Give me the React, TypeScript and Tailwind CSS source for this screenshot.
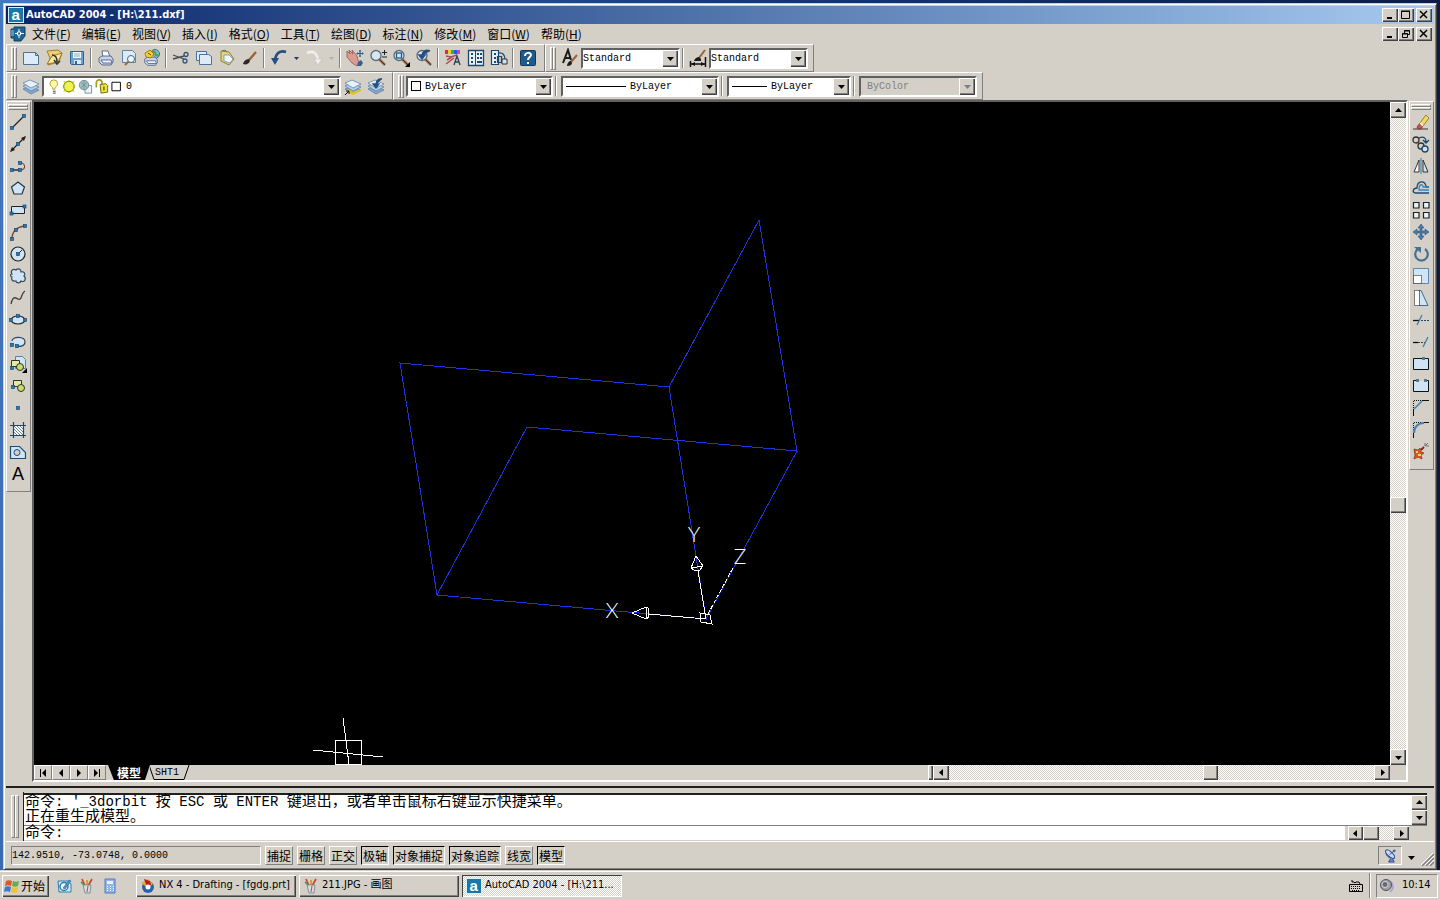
import React from "react";

const raised =
  "bg-[#d4d0c8] shadow-[inset_1px_1px_#ffffff,inset_-1px_-1px_#404040,inset_-2px_-2px_#808080]";
const sunken = "border border-t-[#808080] border-l-[#808080] border-r-white border-b-white";
const dither =
  "bg-[repeating-conic-gradient(#ffffff_0_25%,#d4d0c8_0_50%)] bg-[length:2px_2px]";

const N = "#1c4870";
const F = "#cfe4f4";
const B = "#2a78b0";

function Node({ x, y }: { x: number; y: number }) {
  return <rect x={x - 1.5} y={y - 1.5} width="3" height="3" fill={B} stroke="#164a78" strokeWidth=".7" />;
}

function Layers() {
  return (
    <g stroke="#56799c" strokeWidth=".7">
      <path d="M2 13l7-3 9 4-8 4z" fill="#86a8cc" />
      <path d="M2 10l7-3 9 4-8 4z" fill="#b4cfe8" />
      <path d="M2 7l7-3 9 4-8 4z" fill="#e6f1fb" />
    </g>
  );
}

function Lens({ children }: { children?: React.ReactNode }) {
  return (
    <g>
      <path d="M11 11l6 6" stroke="#a06a40" strokeWidth="2.6" />
      <path d="M11 11l6 6" stroke="#3a3a44" strokeWidth="1" />
      <circle cx="8" cy="7.500" r="5" fill="#d6e6f2" stroke="#5a6a7c" strokeWidth="1.3" />
      {children}
    </g>
  );
}

function Printer() {
  return (
    <g stroke="#4e5f86" strokeWidth=".9">
      <path d="M6 3h6l2 6H7z" fill="#fff" />
      <path d="M3 10l3-2h9l2 3v3l-2 3H6l-3-3z" fill="#c9d3ea" />
      <path d="M5 12h10l1 3H7z" fill="#f4f6fb" />
    </g>
  );
}

const icons: Record<string, React.ReactNode> = {
  new: <path d="M2.500 4.500h12l3 3v9h-15z M14.500 4.500v3h3" fill="#dcebf7" stroke="#4d7296" />,
  open: (
    <g strokeWidth=".9">
      <path d="M3 3l11-1 4 3-3 9-11 3 2-7z" fill="#e8cf78" stroke="#9a7420" />
      <path d="M3 16l5-8 10-3-4 9z" fill="#f7e6a4" stroke="#9a7420" />
      <path d="M8 7c4 0 5 3 5 7M10 12l3 4 3-3" fill="none" stroke="#333" strokeWidth="1.500" />
    </g>
  ),
  save: (
    <g>
      <path d="M3.500 3.500h13v13h-12l-1-1z" fill="#6aa0d4" stroke="#2f608f" />
      <path d="M6 4h8v6H6z" fill="#eef6fc" />
      <path d="M7 6h6M7 8h6" stroke="#7f9cb8" strokeWidth=".8" />
      <path d="M7 12h7v4H7z" fill="#dde8f2" />
      <path d="M8 13h2v3H8z" fill="#2f608f" />
    </g>
  ),
  print: <Printer />,
  preview: (
    <g>
      <path d="M3.500 2.500h10l3 3v9h-13z" fill="#dcebf7" stroke="#6084a6" />
      <circle cx="12" cy="11" r="3.500" fill="#eef6fb" stroke="#46688a" />
      <path d="M9.500 13.500L6 17" stroke="#a06a40" strokeWidth="2" />
    </g>
  ),
  publish: (
    <g>
      <circle cx="13" cy="6" r="4.500" fill="#82bddb" stroke="#346f92" />
      <path d="M10 3l3 1 1 3 3 1" stroke="#5c9c4a" strokeWidth="2" fill="none" />
      <g transform="translate(0 2) scale(.9)"><Printer /></g>
      <path d="M3 5l5-3 4 4-3 4-5-1z" fill="#f3cf2c" stroke="#8f6a10" strokeWidth=".8" />
      <path d="M6 5l3 2" stroke="#6b4b00" />
    </g>
  ),
  cut: (
    <g fill="none" strokeWidth="1.300">
      <path d="M2 7l11 4M2 11l11-3" stroke="#4a4a54" />
      <circle cx="15" cy="6.500" r="2" stroke="#33557d" />
      <circle cx="14" cy="13" r="2" stroke="#33557d" />
    </g>
  ),
  copyclip: (
    <g fill="#dcebf7" stroke="#4d7296">
      <path d="M2.500 3.500h10v9h-10z" />
      <path d="M5.500 6.500h9l3 2v8h-12z" />
    </g>
  ),
  paste: (
    <g>
      <path d="M4 3l8 1 5 7-5 6-8-4z" fill="#dfd67a" stroke="#8c8336" />
      <path d="M7 7h5l4 4-3 4-6-2z" fill="#f2f8fc" stroke="#7591ab" strokeWidth=".8" />
      <path d="M5 3l3-1 2 2" stroke="#6f6f78" fill="none" />
    </g>
  ),
  brush: (
    <g>
      <path d="M9 12l7-8" stroke="#9a6238" strokeWidth="2.400" />
      <path d="M3 16c1-4 4-5 6-5l1 2c-1 3-4 4-7 3z" fill="#2f2a28" />
    </g>
  ),
  undo: (
    <g>
      <path d="M17 4C11 2 7 5 6 12" fill="none" stroke="#244f80" strokeWidth="2.600" />
      <path d="M2 10h8l-4 7z" fill="#244f80" />
    </g>
  ),
  redo: (
    <g>
      <path d="M3 5c6-3 10 0 11 7" fill="none" stroke="#f1efea" strokeWidth="2.600" />
      <path d="M10 11h8l-4 6z" fill="#f1efea" stroke="#bab6ae" strokeWidth=".5" />
    </g>
  ),
  pan: (
    <g>
      <path d="M2 3l3 3-1-4 4 4-1-4 5 6 1 4 3 3-4 3-5-3-5-6z" fill="#d99c92" stroke="#96564e" strokeWidth=".8" />
      <path d="M13 14l3-2 2 3-2 3h-4z" fill="#34608f" />
      <path d="M15 2v7M11.500 5.500h7M14 3h2M14 8h2M12.500 4.500v2M17.500 4.500v2" stroke="#29588a" strokeWidth="1" />
    </g>
  ),
  zoomrt: <Lens><path d="M16.500 2v5M14 4.500h5M14 9h5" stroke="#222" /></Lens>,
  zoomwin: (
    <Lens>
      <rect x="5.500" y="5" width="5" height="5" fill="none" stroke="#1f5a90" strokeWidth="1.300" />
      <path d="M19 14v5h-5z" fill="#000" />
    </Lens>
  ),
  zoomprev: <Lens><path d="M16 3C11 1 8 4 8 8M5 7h6l-3 4z" fill="#244f80" stroke="#244f80" strokeWidth="1.500" /></Lens>,
  props: (
    <g>
      <path d="M2 2h3v4H2z" fill="#e82828" />
      <path d="M5 2h3v4H5z" fill="#e8d028" />
      <path d="M8 2h3v4H8z" fill="#28b848" />
      <path d="M11 2h3v4h-3z" fill="#2858e8" />
      <path d="M14 2h3v4h-3z" fill="#d838c8" />
      <path d="M3 8l5 1 6-2M4 12l5-3M3 16l8-6" stroke="#b04858" strokeWidth="1.500" fill="none" />
      <path d="M11 17l3-9 3 9M12 14h4" stroke="#2a4058" strokeWidth="1.300" fill="none" />
    </g>
  ),
  design: (
    <g>
      <path d="M2.500 2.500h15v15h-15z" fill="#eaf3fa" stroke={N} strokeWidth="1.300" />
      <path d="M9.500 3v14" stroke={N} />
      <path d="M5 5h2v2H5zM5 9h2v2H5zM5 13h2v2H5zM11 5h2v2h-2zM14 5h2v2h-2zM11 9h2v2h-2zM14 9h2v2h-2zM11 13h5v2h-5z" fill={N} />
    </g>
  ),
  palettes: (
    <g>
      <path d="M2.500 2.500h7v14h-7z" fill="#eaf3fa" stroke={N} strokeWidth="1.200" />
      <path d="M5 5h2v2H5zM5 9h2v2H5zM5 13h2v2H5z" fill={N} />
      <path d="M9 5c5-1 7 2 7 7M8.500 8.500h4v6h-4z" fill="none" stroke={N} strokeWidth="1.200" />
      <path d="M13 11h5v5h-5z" fill={F} stroke="#333" />
    </g>
  ),
  help: (
    <g>
      <rect x="2.500" y="2.500" width="15" height="15" rx="1" fill="#1e5a8c" stroke="#12395c" />
      <path d="M7 8c0-4 6-4 6-1 0 2-3 2-3 5" fill="none" stroke="#fff" strokeWidth="2" />
      <path d="M9 14h2v2H9z" fill="#fff" />
    </g>
  ),
  textstyle: (
    <g>
      <path d="M3 15L8 2l3 10M5 10h5" stroke="#1b1b1b" strokeWidth="2" fill="none" />
      <path d="M11 14l6-7" stroke="#9a6238" strokeWidth="2" />
      <path d="M7 18c0-3 2-5 4-5l1 2c0 2-2 3-5 3z" fill="#1b1b1b" />
    </g>
  ),
  dimstyle: (
    <g>
      <path d="M11 10l6-8" stroke="#9a6238" strokeWidth="2" />
      <path d="M6 13c1-3 3-4 5-4l2 2v2z" fill="#1b1b1b" />
      <path d="M2.500 13v6M17.500 9v10M3 16h14" stroke="#111" strokeWidth="1.500" />
      <path d="M3 16l4-2v4zM17 16l-4-2v4z" fill="#111" />
    </g>
  ),
  layers: <Layers />,
  layercur: (
    <g>
      <Layers />
      <path d="M5 13l5 3 8-3v2l-8 4-6-3z" fill="#e2c61c" />
      <path d="M2 19l4-4M3 15h3v3" stroke="#111" fill="none" />
    </g>
  ),
  layerprev: (
    <g>
      <Layers />
      <path d="M16 3c-5-1-6 3-6 6M7 8h6l-3 4z" fill="#244f80" stroke="#244f80" strokeWidth="1.300" />
    </g>
  ),
  line: <g><path d="M4 16L16 4" stroke="#222" strokeWidth="1.200" /><Node x={4} y={16} /><Node x={16} y={4} /></g>,
  xline: (
    <g>
      <path d="M3 17L17 3" stroke="#222" strokeWidth="1.200" />
      <path d="M2 18l2-5 3 3zM18 2l-2 5-3-3z" fill="#222" />
      <Node x={10} y={10} />
    </g>
  ),
  pline: <g><path d="M4 14h8c7 0 5-7 1-7" fill="none" stroke="#7a4038" strokeWidth="1.200" /><path d="M4 14h8" stroke="#222" /><Node x={4} y={14} /><Node x={12} y={14} /><Node x={12} y={7} /></g>,
  polygon: <path d="M10 4l6.500 5-2.500 7H6L3.500 9z" fill={F} stroke="#243444" strokeWidth="1.200" />,
  rect: <g><path d="M3.500 6.500h13v7h-13z" fill={F} stroke="#222" /><Node x={3.5} y={13.5} /><Node x={16.5} y={6.5} /></g>,
  arc: <g><path d="M4 17C4 9 9 5 17 4" fill="none" stroke="#7a4038" strokeWidth="1.300" /><Node x={4} y={17} /><Node x={8} y={8} /><Node x={17} y={4} /></g>,
  circle: <g><circle cx="10" cy="10" r="7" fill={F} stroke="#222" strokeWidth="1.200" /><path d="M10 10l4-4" stroke="#222" /><Node x={10} y={10} /></g>,
  revcloud: <path d="M4 8c-2-3 1-6 4-4 2-2 5-1 5 2 3-1 5 2 3 4 3 3 0 7-3 5-1 3-5 2-5 0-4 1-5-2-4-4-2-1-2-3 0-3z" fill={F} stroke="#3a4a5a" strokeWidth="1.200" />,
  spline: <path d="M3 16c2-9 5-6 7-5 4 2 3-6 7-8" fill="none" stroke="#3c3c44" strokeWidth="1.300" />,
  ellipse: <g><ellipse cx="10" cy="10" rx="7" ry="4" fill={F} stroke="#222" strokeWidth="1.200" /><Node x={3} y={10} /><Node x={17} y={10} /><Node x={10} y={6} /></g>,
  ellarc: <g><path d="M4 9c0-5 13-5 13 1 0 4-5 5-8 4" fill={F} stroke="#35465a" strokeWidth="1.200" /><Node x={4} y={13} /><Node x={9} y={14} /></g>,
  insert: (
    <g strokeWidth="1">
      <path d="M7.500 2.500h7l3 3v9h-10z" fill={F} stroke="#5b7fa2" />
      <path d="M3.500 6.500h8v6h-8z" fill="#e2eca0" stroke="#333" />
      <circle cx="12" cy="13" r="3.500" fill="#c8dc6a" stroke="#333" />
      <Node x={4} y={14} />
      <path d="M19 14v5h-5z" fill="#000" />
    </g>
  ),
  block: (
    <g strokeWidth="1">
      <path d="M5.500 4.500h8v6h-8z" fill="#e2eca0" stroke="#333" />
      <circle cx="13" cy="12" r="3.500" fill="#c8dc6a" stroke="#333" />
      <Node x={5} y={11} />
    </g>
  ),
  point: <Node x={10} y={10} />,
  hatch: (
    <g>
      <path d="M6 6h9v9H6z" fill="#fff" />
      <path d="M6 12l3 3M6 9l6 6M6 6l9 9M9 6l6 6M12 6l3 3" stroke="#35648e" strokeWidth=".8" />
      <path d="M5.500 2v16M15.500 2v16M2 5.500h16M2 15.500h16" stroke={N} strokeWidth="1.200" />
    </g>
  ),
  region: <g><path d="M2.500 4.500h9l6 6v6h-15z" fill={F} stroke="#1f4c74" strokeWidth="1.200" /><circle cx="9" cy="10.500" r="3" fill="#d4d0c8" stroke="#1f4c74" /></g>,
  erase: (
    <g>
      <path d="M2 17h15" stroke="#333" />
      <path d="M9 11l6-8 3 3-6 8z" fill="#f1dc58" stroke="#7e6a20" strokeWidth=".8" />
      <path d="M6 15l3-4 3 3-2 3H7z" fill="#d0524c" stroke="#7e2824" strokeWidth=".8" />
      <path d="M9 11l3 3" stroke="#fff" strokeWidth="1.300" />
    </g>
  ),
  copy: (
    <g fill="#d4d0c8" strokeWidth="1.300">
      <circle cx="5" cy="6" r="3" stroke="#333" />
      <path d="M8 4c5-2 7 0 7 4M12 6l3 3 3-3" fill="none" stroke={N} />
      <circle cx="10" cy="12" r="3" stroke="#333" />
      <circle cx="14" cy="15" r="3" fill={F} stroke={N} />
    </g>
  ),
  mirror: <g><path d="M8 4v12H3z" fill="#fff" stroke="#333" /><path d="M12 4v12h5z" fill={F} stroke="#333" /><path d="M10 2v16" stroke={B} /></g>,
  offset: (
    <g fill="none" strokeWidth="1.300">
      <path d="M18 15H4c-3-1-2-5 2-5 0-8 9-8 9-1h3" stroke={N} />
      <path d="M18 12H8c0-7 4-6 4-3v0h6" stroke="#3e82b8" />
    </g>
  ),
  array: <path d="M2.500 2.500h5.500v5.500H2.500zM12.500 2.500H18v5.500h-5.500zM2.500 12.500h5.500V18H2.500zM12.500 12.500H18V18h-5.500z" fill="#e8f2fa" stroke="#222" strokeWidth="1.200" />,
  move: <path d="M10 2l3 4h-2v3h3V7l4 3-4 3v-2h-3v3h2l-3 4-3-4h2v-3H6v2l-4-3 4-3v2h3V6H7z" fill="#4a7aa6" stroke="#2a557c" strokeWidth=".6" />,
  rotate: <g><path d="M7 5a6.300 6.300 0 1 0 7 0" fill="none" stroke="#48708f" strokeWidth="2.200" /><path d="M3 3h7v6z" fill="#48708f" /></g>,
  scale: <g><path d="M2.500 2.500h15v15h-15z" fill={F} stroke="#5f87ab" /><path d="M2.500 9.500h8v8h-8z" fill="#fff" stroke="#111" strokeDasharray="1 1" /></g>,
  stretch: <g><path d="M8 2.500h2l7 15H8z" fill={F} stroke="#3f6b92" /><path d="M3.500 2.500h5v15h-5z" fill="#fff" stroke="#111" strokeDasharray="1 1" /></g>,
  trim: <g><path d="M2 10.500h6" stroke="#111" strokeWidth="1.300" /><path d="M10 10.500h8" stroke={N} strokeDasharray="2 1" /><path d="M6 15l5-10" stroke="#3e78a8" strokeWidth="1.300" /></g>,
  extend: <g><path d="M2 10.500h5" stroke="#111" strokeWidth="1.300" /><path d="M7 10.500h7" stroke={N} strokeDasharray="2 1" /><path d="M12 15l5-10" stroke="#3e78a8" strokeWidth="1.300" /></g>,
  breakat: <g><path d="M2.500 4.500h15v11h-15z" fill={F} stroke="#111" /><path d="M11 3h3v3h-3z" fill="#58788c" /></g>,
  break: <g><path d="M3 5h14v10H3z" fill={F} /><path d="M5 4.500H2.500v11h15v-11H15" fill="none" stroke="#111" /><path d="M5 3h3v3H5zM13 3h3v3h-3z" fill="#58788c" /></g>,
  chamfer: <g fill="none"><path d="M2.500 10V2.500H10" stroke="#111" strokeDasharray="1 1" /><path d="M2.500 18v-7M11 2.500h7" stroke="#111" /><path d="M3 11l8-8" stroke="#3e82b8" strokeWidth="1.600" /></g>,
  fillet: <g fill="none"><path d="M2.500 10V2.500H10" stroke="#111" strokeDasharray="1 1" /><path d="M2.500 18v-5M13 2.500h5" stroke="#111" /><path d="M3 13c0-6 4-10 10-10" stroke="#3e82b8" strokeWidth="2" /></g>,
  explode: (
    <g>
      <path d="M3 7l4 1 2-2 1 4 3 1-3 2 1 4-4-2-4 2 1-4z" fill="#e0562c" stroke="#7c2c10" strokeWidth=".7" />
      <path d="M5 9h2v2H5zM7 12h3v2H7z" fill="#ffd850" />
      <path d="M10 8l3-3" stroke="#7c2c10" strokeWidth="2" />
      <path d="M14 4l3-3M15 4h3M14 1v3" stroke="#555" strokeWidth=".8" />
    </g>
  ),
};

function Tool({ name, className }: { name: string; className: string }) {
  return (
    <button type="button" aria-label={name} className={`flex shrink-0 items-center justify-center ${className}`}>
      <svg viewBox="0 0 20 20" className="size-5" fill="none">{icons[name]}</svg>
    </button>
  );
}

function Tools({ names }: { names: string[] }) {
  return <>{names.map((n) => <Tool key={n} name={n} className="h-6 w-[23px]" />)}</>;
}

function Sep() {
  return (
    <span className="flex w-[6px] shrink-0 justify-center">
      <span className="h-[20px] w-[2px] border-l border-l-[#808080] border-r border-r-white" />
    </span>
  );
}

function Grip() {
  return (
    <span className="mr-[2px] ml-1 flex h-[23px] shrink-0">
      <span className="w-[3px] border border-t-white border-l-white border-r-[#808080] border-b-[#808080]" />
      <span className="w-[3px] border border-t-white border-l-white border-r-[#808080] border-b-[#808080]" />
    </span>
  );
}

function Bar({ label, children }: { label: string; children: React.ReactNode }) {
  return (
    <div role="toolbar" aria-label={label} className="flex h-full shrink-0 items-center border border-t-white border-l-white border-r-[#808080] border-b-[#808080] pr-[5px]">
      <Grip />
      {children}
    </div>
  );
}

function Tri({ dir, className = "fill-black" }: { dir: "up" | "down" | "left" | "right"; className?: string }) {
  const d = { up: "M1 6h7L4.500 2z", down: "M1 3h7L4.500 7z", left: "M6 1v7L2 4.500z", right: "M3 1v7l4-3.500z" }[dir];
  return <svg viewBox="0 0 9 9" className={`size-[9px] ${className}`}><path d={d} /></svg>;
}

function Combo({ label, value, options, className, disabled, children }: {
  label: string; value: string; options: string[]; className: string; disabled?: boolean; children?: React.ReactNode;
}) {
  return (
    <label className={`flex h-[21px] shrink-0 items-center border-2 border-t-[#606060] border-l-[#606060] border-r-white border-b-white ${disabled ? "bg-[#d4d0c8]" : "bg-white"} ${className}`}>
      {children}
      <select
        aria-label={label}
        defaultValue={value}
        disabled={disabled}
        className={`h-full min-w-0 flex-1 appearance-none bg-transparent font-['Liberation_Mono',monospace] text-[10px] outline-none ${disabled ? "text-[#808080]" : "text-black"}`}
      >
        {options.map((o) => <option key={o}>{o}</option>)}
      </select>
      <span className={`flex h-full w-[16px] shrink-0 items-center justify-center ${raised}`}>
        <Tri dir="down" className={disabled ? "fill-[#808080]" : "fill-black"} />
      </span>
    </label>
  );
}

function Btn({ dir, className }: { dir: "up" | "down" | "left" | "right"; className: string }) {
  return (
    <button type="button" aria-label={`Scroll ${dir}`} className={`flex shrink-0 items-center justify-center ${raised} ${className}`}>
      <Tri dir={dir} />
    </button>
  );
}

function WindowButtons({ restore }: { restore?: boolean }) {
  const cls = `flex h-[14px] w-[16px] items-center justify-center ${raised}`;
  return (
    <div className="ml-auto flex pr-[2px]">
      <button type="button" aria-label="Minimize" className={cls}>
        <svg viewBox="0 0 10 10" className="size-[10px]"><path d="M2 7h5v2H2z" /></svg>
      </button>
      <button type="button" aria-label={restore ? "Restore" : "Maximize"} className={cls}>
        <svg viewBox="0 0 10 10" className="size-[10px]" fill="none" stroke="#000">
          {restore ? <path d="M3.500 4V1.500h5v4H7M1.500 4.500h5v4h-5zM1 5h6M3 2h6" /> : <path d="M.5 1.500h8v7h-8zM0 1h9" />}
        </svg>
      </button>
      <button type="button" aria-label="Close" className={`ml-[2px] ${cls}`}>
        <svg viewBox="0 0 10 10" className="size-[10px]" fill="none" stroke="#000" strokeWidth="1.500"><path d="M1 1l7 7M8 1L1 8" /></svg>
      </button>
    </div>
  );
}

function AppLogo() {
  return (
    <svg viewBox="0 0 16 16" className="size-[16px] shrink-0" aria-hidden="true">
      <path d="M0 0h16v16H0z" fill="#d8eefa" />
      <path d="M1 1h14v14H1z" fill="#1878a8" />
      <text x="3.500" y="13" fontSize="15" fontWeight="700" fill="#fff" fontFamily="Liberation Sans, sans-serif">a</text>
    </svg>
  );
}

function PaintCup() {
  return (
    <svg viewBox="0 0 16 16" className="size-[16px] shrink-0" aria-hidden="true">
      <path d="M6 8L3 1M8 8V2M9 8l4-7" stroke="#c84430" strokeWidth="1.700" />
      <path d="M6 8L2 4" stroke="#3d9a4a" strokeWidth="1.500" />
      <path d="M8 7V2" stroke="#e0b030" strokeWidth="1.500" />
      <path d="M4 7h8l-1 8H6z" fill="#d5dde2" stroke="#747c84" strokeWidth=".8" />
      <path d="M9 8l-1 6" stroke="#c84430" />
    </svg>
  );
}

function Dock({ names, label, className }: { names: string[]; label: string; className: string }) {
  return (
    <div className={`w-[26px] shrink-0 ${className}`}>
      <div role="toolbar" aria-label={label} className="flex w-[25px] flex-col items-center border border-t-white border-l-white border-r-[#808080] border-b-[#808080] pr-px pb-[6px]">
        <span className="flex h-[9px] w-[20px] flex-col justify-center">
          <span className="h-[3px] border border-t-white border-l-white border-r-[#808080] border-b-[#808080]" />
          <span className="h-[3px] border border-t-white border-l-white border-r-[#808080] border-b-[#808080]" />
        </span>
        {names.map((n) => n === "mtext" ? (
          <button key={n} type="button" className="h-[22px] w-[22px] font-['Liberation_Sans',sans-serif] text-[18px] leading-[22px]">A</button>
        ) : <Tool key={n} name={n} className="h-[22px] w-[22px]" />)}
      </div>
    </div>
  );
}

const menus = [
  ["文件", "F"], ["编辑", "E"], ["视图", "V"], ["插入", "I"], ["格式", "O"], ["工具", "T"],
  ["绘图", "D"], ["标注", "N"], ["修改", "M"], ["窗口", "W"], ["帮助", "H"],
];

const modes: [string, boolean][] = [
  ["捕捉", false], ["栅格", false], ["正交", false], ["极轴", true],
  ["对象捕捉", true], ["对象追踪", true], ["线宽", false], ["模型", true],
];

function Drawing() {
  return (
    <svg viewBox="34 102 1356 663" preserveAspectRatio="xMinYMin meet" className="h-full w-full" fill="none" shapeRendering="crispEdges" aria-label="Drawing">
      <g stroke="#1c34e0">
        <path d="M400 363L669 387L759 220L797 451L527 427L437 595Z" />
        <path d="M437 595L706 619L669 387M797 451L706 619" />
      </g>
      <g stroke="#fff">
        <path d="M706 619L648 614M706 619L698 571" />
        <path d="M708 614L734 566" strokeDasharray="4 2" />
        <path d="M700 613l10 2 2 9-11-2z" />
        <path d="M632 613l14-6 2 1 1 9-3 2zM646 607v12" />
        <path d="M696 556l-5 12 3 2 6 0 3-4zM691 568l12-2" />
        <path d="M313 750L383 757M343 718L349 764M335.500 740.500h26v24h-26z" />
      </g>
      <g fill="#fff" fontFamily="Lato, sans-serif" fontWeight="300" fontSize="21" textAnchor="middle">
        <text x="612" y="618">X</text>
        <text x="694" y="542">Y</text>
        <text x="740" y="564">Z</text>
      </g>
    </svg>
  );
}

function NavButtons() {
  const shapes = ["M2 1h1v8H2zM8 1v8L4 5z", "M7 1v8L3 5z", "M3 1v8l4-4z", "M2 1v8l4-4zM7 1h1v8H7z"];
  return (
    <div className="flex">
      {["First", "Previous", "Next", "Last"].map((n, i) => (
        <button key={n} type="button" aria-label={`${n} layout`} className="flex w-[18px] items-center justify-center border border-t-white border-l-white border-r-[#808080] border-b-[#808080]">
          <svg viewBox="0 0 10 10" className="size-[10px]"><path d={shapes[i]} /></svg>
        </button>
      ))}
    </div>
  );
}

function Task({ label, active, children }: { label: string; active?: boolean; children: React.ReactNode }) {
  return (
    <button type="button" className={`flex h-[22px] w-[160px] items-center gap-[3px] pl-1 ${active ? `${dither} shadow-[inset_1px_1px_#404040,inset_-1px_-1px_#ffffff]` : raised}`}>
      {children}
      <span className="whitespace-nowrap">{label}</span>
    </button>
  );
}

const ui = "font-['DejaVu_Sans_Condensed','DejaVu_Sans','Noto_Sans_CJK_SC',sans-serif]";

export default function App() {
  return (
    <div className={`flex h-screen flex-col overflow-hidden bg-[linear-gradient(100deg,#4478c0_0%,#16387e_45%,#0c1638_100%)] text-black ${ui}`}>
      <div className="flex min-h-0 flex-1 px-[3px] pt-[3px]">
        <div className="flex min-w-0 flex-1 flex-col border border-t-[#d4d0c8] border-l-[#d4d0c8] border-r-[#404040] border-b-[#404040] bg-[#d4d0c8] px-[2px] pt-[2px] pb-px shadow-[inset_1px_1px_#ffffff,inset_-1px_-1px_#808080]">
          <header className="flex h-[18px] shrink-0 items-center gap-[2px] bg-linear-to-r from-[#0a246a] to-[#a6caf0] pl-[2px] text-white">
            <AppLogo />
            <h1 className="text-[11px] font-bold whitespace-nowrap">AutoCAD 2004 - [H:\211.dxf]</h1>
            <WindowButtons />
          </header>

          <nav className="flex h-5 shrink-0 items-center pl-[4px]">
            <svg viewBox="0 0 16 16" className="mr-[6px] size-[16px]" aria-hidden="true">
              <path d="M1 3h3V1h11v9l-4 5H4v-3H1z" fill="#1d6494" stroke="#123e60" />
              <path d="M9 3v9M5 7.500h9" stroke="#fff" />
              <path d="M7.500 6h3v3h-3z" fill="#1d6494" stroke="#fff" />
              <path d="M1 5h3M1 7h3M1 9h3" stroke="#9cc6e2" />
            </svg>
            <div className="flex gap-[11px] font-['Noto_Sans_CJK_SC',sans-serif] text-[12px] leading-5">
              {menus.map(([t, k]) => (
                <button key={k} type="button" className="whitespace-nowrap">{t}(<u>{k}</u>)</button>
              ))}
            </div>
            <WindowButtons restore />
          </nav>

          <div className="flex h-7 shrink-0">
            <Bar label="Standard">
              <Tools names={["new", "open", "save"]} />
              <Sep />
              <Tools names={["print", "preview", "publish"]} />
              <Sep />
              <Tools names={["cut", "copyclip", "paste", "brush"]} />
              <Sep />
              <Tools names={["undo"]} />
              <span className="flex w-[12px] justify-center"><svg viewBox="0 0 5 3" className="h-[3px] w-[5px]"><path d="M0 0h5L2.500 3z" fill="#1d3c60" /></svg></span>
              <Tools names={["redo"]} />
              <span className="flex w-[12px] justify-center"><svg viewBox="0 0 5 3" className="h-[3px] w-[5px]"><path d="M0 0h5L2.500 3z" fill="#b4b0a8" /></svg></span>
              <Sep />
              <Tools names={["pan", "zoomrt", "zoomwin", "zoomprev"]} />
              <Sep />
              <Tools names={["props", "design", "palettes"]} />
              <Sep />
              <Tools names={["help"]} />
            </Bar>
            <Bar label="Styles">
              <Tools names={["textstyle"]} />
              <Combo label="Text style" value="Standard" options={["Standard"]} className="w-[99px]" />
              <Sep />
              <Tools names={["dimstyle"]} />
              <Combo label="Dimension style" value="Standard" options={["Standard"]} className="w-[99px]" />
            </Bar>
          </div>

          <div className="flex h-7 shrink-0">
            <Bar label="Layers">
              <Tools names={["layers"]} />
              <Combo label="Layer" value="0" options={["0"]} className="w-[299px]">
                <svg viewBox="0 0 82 18" className="h-[17px] w-[82px] shrink-0" aria-hidden="true">
                  <path d="M7 12c0-3-3-3-3-6a4 4 0 0 1 8 0c0 3-3 3-3 6z" fill="#fff8a8" stroke="#b09a30" />
                  <path d="M7 14h3M7 16h3" stroke="#444" />
                  <path d="M18 3l3 1 3-2 3 2 3-1-1 3 2 3-2 3 1 3-3-1-3 2-3-2-3 1 1-3-2-3 2-3z" fill="#e8d820" />
                  <circle cx="24" cy="9" r="5.500" fill="#f4f04c" stroke="#5a8a42" />
                  <path d="M41 8h7v8h-7z" fill="#eef4f8" stroke="#6f93a8" />
                  <circle cx="40" cy="7.500" r="5" fill="#a4c0c4" stroke="#6d8f96" />
                  <path d="M37 5l6 5M43 5l-6 5M40 3v9" stroke="#6d8f96" strokeWidth=".8" />
                  <path d="M53 10V5c0-4 6-4 6 0v3" fill="none" stroke="#a89c20" strokeWidth="1.800" />
                  <path d="M57 7l6-1 2 2v7l-7 1z" fill="#ece23c" stroke="#6f6812" />
                  <path d="M61 9v4" stroke="#6f6812" strokeWidth="1.500" />
                  <path d="M69.500 4.500h9v9h-9z" fill="#fff" stroke="#000" />
                </svg>
              </Combo>
              <Tools names={["layercur", "layerprev"]} />
            </Bar>
            <Bar label="Properties">
              <Combo label="Color" value="ByLayer" options={["ByLayer"]} className="w-[147px] gap-1 pl-[3px]">
                <span className="size-[10px] shrink-0 border border-black" />
              </Combo>
              <Sep />
              <Combo label="Linetype" value="ByLayer" options={["ByLayer"]} className="ml-[2px] w-[158px] gap-1 pl-[3px]">
                <span className="h-px w-[60px] shrink-0 bg-black" />
              </Combo>
              <Sep />
              <Combo label="Lineweight" value="ByLayer" options={["ByLayer"]} className="ml-[2px] w-[124px] gap-1 pl-[3px]">
                <span className="h-px w-[35px] shrink-0 bg-black" />
              </Combo>
              <Sep />
              <Combo label="Plot style" value="ByColor" options={["ByColor"]} disabled className="ml-[2px] w-[118px] pl-[6px]" />
            </Bar>
          </div>

          <main className="flex min-h-0 flex-1">
            <Dock label="Draw" className="pt-px" names={["line", "xline", "pline", "polygon", "rect", "arc", "circle", "revcloud", "spline", "ellipse", "ellarc", "insert", "block", "point", "hatch", "region", "mtext"]} />
            <section className="flex min-w-0 flex-1 flex-col border-2 border-t-[#606060] border-l-[#606060] border-r-white border-b-white">
              <div className="flex min-h-0 flex-1">
                <div className="min-w-0 flex-1 bg-black"><Drawing /></div>
                <div className={`flex w-[16px] shrink-0 flex-col ${dither}`}>
                  <Btn dir="up" className="h-[16px]" />
                  <span className="flex-[379]" />
                  <span className={`h-[16px] shrink-0 ${raised}`} />
                  <span className="flex-[236]" />
                  <Btn dir="down" className="h-[16px]" />
                </div>
              </div>
              <div className="flex h-[15px] shrink-0">
                <NavButtons />
                <button type="button" className="ml-[2px] w-[42px] bg-black font-['Noto_Sans_CJK_SC',sans-serif] text-[12px] leading-[14px] font-bold text-white [clip-path:polygon(0_0,100%_0,88%_100%,14%_100%)]">模型</button>
                <button type="button" className="relative w-[40px] pr-[6px] font-['Liberation_Mono',monospace] text-[10px] leading-[14px]">
                  <svg viewBox="0 0 40 15" className="absolute inset-0 size-full" fill="none" stroke="#000"><path d="M-1 0l5 14.500h30L39 0" /></svg>
                  SHT1
                </button>
                <span className="min-w-0 flex-[738]" />
                <span className={`w-[5px] shrink-0 ${raised}`} />
                <div className={`flex min-w-0 flex-[457] ${dither}`}>
                  <Btn dir="left" className="w-[16px]" />
                  <span className="flex-[254]" />
                  <span className={`w-[15px] shrink-0 ${raised}`} />
                  <span className="flex-[156]" />
                  <Btn dir="right" className="w-[16px]" />
                </div>
                <span className="w-[16px] shrink-0" />
              </div>
            </section>
            <Dock label="Modify" className="pt-px pl-px" names={["erase", "copy", "mirror", "offset", "array", "move", "rotate", "scale", "stretch", "trim", "extend", "breakat", "break", "chamfer", "fillet", "explode"]} />
          </main>

          <div className="flex h-[10px] shrink-0 flex-col justify-center"><span className="h-[2px] bg-[#202020]" /></div>

          <section className="flex h-[49px] shrink-0 pr-[7px] pl-[5px] font-['Liberation_Mono','Noto_Sans_CJK_SC',monospace] text-[14px]">
            <span className="mt-[3px] mr-[4px] flex h-[43px] w-[8px] shrink-0">
              <span className="w-1 border border-t-white border-l-white border-r-[#808080] border-b-[#808080]" />
              <span className="w-1 border border-t-white border-l-white border-r-[#808080] border-b-[#808080]" />
            </span>
            <div className="flex min-w-0 flex-1 flex-col border-l border-l-[#202020]">
              <div className="mt-px flex h-[33px] border-t-2 border-b border-t-[#202020] border-b-[#808080] bg-white">
                <div className="min-w-0 flex-1 pl-px leading-[15px] whitespace-nowrap">
                  <p className="h-[15px]"><span className="text-[15px]">命令</span>: '_3dorbit <span className="text-[15px]">按</span> ESC <span className="text-[15px]">或</span> ENTER <span className="text-[15px]">键退出，或者单击鼠标右键显示快捷菜单。</span></p>
                  <p className="h-[15px] text-[15px]">正在重生成模型。</p>
                </div>
                <div className="flex w-[16px] shrink-0 flex-col">
                  <Btn dir="up" className="h-[15px]" />
                  <Btn dir="down" className="h-[15px]" />
                </div>
              </div>
              <div className="flex h-[14px]">
                <label className="flex min-w-0 flex-1 items-center bg-white pl-px leading-[14px]">
                  <span><span className="text-[15px]">命令</span>:</span>
                  <input type="text" className="h-[14px] min-w-0 flex-1 bg-transparent outline-none" />
                </label>
                <div className={`ml-[3px] flex w-[61px] shrink-0 ${dither}`}>
                  <Btn dir="left" className="w-[15px]" />
                  <span className={`w-[16px] ${raised}`} />
                  <span className="flex-1" />
                  <Btn dir="right" className="w-[16px]" />
                </div>
                <span className="w-[18px] shrink-0" />
              </div>
            </div>
          </section>

          <footer className="flex h-[27px] shrink-0 items-center border-t border-t-white pl-[5px]">
            <output className={`mr-1 flex h-[19px] w-[250px] shrink-0 items-center font-['Liberation_Mono',monospace] text-[10px] whitespace-pre ${sunken}`}>142.9510, -73.0748, 0.0000</output>
            <div className="flex gap-[4px] font-['Noto_Sans_CJK_SC',sans-serif] text-[12px]">
              {modes.map(([t, on]) => (
                <button key={t} type="button" aria-pressed={on} className={`h-[19px] border px-px leading-[17px] whitespace-nowrap ${on ? "border-t-black border-l-black border-r-white border-b-white" : "border-t-white border-l-white border-r-[#808080] border-b-[#808080]"}`}>{t}</button>
              ))}
            </div>
            <button type="button" aria-label="Communication center" className={`ml-auto flex h-[19px] w-[24px] items-center justify-center ${sunken}`}>
              <svg viewBox="0 0 16 16" className="size-[15px]">
                <path d="M3 3c0 6 3 8 9 8L3 3z" fill="#6286c4" stroke="#2f4f8f" />
                <ellipse cx="7.500" cy="6.500" rx="6" ry="2.500" transform="rotate(42 7.500 6.500)" fill="#c9daf4" stroke="#2f4f8f" />
                <path d="M7 7l5-4M8 11l-2 4h6l-2-4" fill="#6286c4" stroke="#2f4f8f" />
                <circle cx="12" cy="3" r="1.500" fill="#4168b0" />
              </svg>
            </button>
            <button type="button" aria-label="Status bar menu" className="mx-[5px] mt-1"><Tri dir="down" /></button>
            <svg viewBox="0 0 13 13" className="mt-2 size-[13px]" fill="none">
              <path d="M1 13L13 1M5 13l8-8M9 13l4-4" stroke="#808080" strokeWidth="1.500" />
              <path d="M0 12L12 0M4 12l9-9M8 12l5-5" stroke="#fff" />
            </svg>
          </footer>
        </div>
      </div>

      <div className="flex h-[30px] shrink-0 items-center border-t border-t-[#d4d0c8] bg-[#d4d0c8] pr-[2px] pl-[2px] text-[11px] shadow-[inset_0_1px_#ffffff]">
        <button type="button" className={`flex h-[22px] w-[47px] shrink-0 items-center gap-px pl-[2px] ${raised}`}>
          <svg viewBox="0 0 16 16" className="size-[16px] shrink-0" aria-hidden="true">
            <path d="M2 3c2-1 4-1 6 0L7 8C5 7 3 7 1 8z" fill="#e0542c" />
            <path d="M9 3c2 1 4 1 6 0l-1 5c-2 1-4 1-6 0z" fill="#62b046" />
            <path d="M1 9c2-1 4-1 6 0l-1 5c-2-1-4-1-6 0z" fill="#3a78d0" />
            <path d="M8 9c2 1 4 1 6 0l-1 5c-2 1-4 1-6 0z" fill="#f0c030" />
          </svg>
          <span className="font-['Noto_Sans_CJK_SC',sans-serif] text-[12px] whitespace-nowrap">开始</span>
        </button>
        <div className="mr-[18px] ml-[7px] flex gap-[7px]">
          <button type="button" aria-label="Show desktop">
            <svg viewBox="0 0 16 16" className="size-[16px]">
              <path d="M2 3h10l3 3v8H3z" fill="#d5ebf8" stroke="#2d7ab0" />
              <circle cx="8" cy="8.500" r="4" fill="#fff" stroke="#2480bc" strokeWidth="1.500" />
              <path d="M7 10l6-8 2 1-6 8z" fill="#4c9acc" stroke="#205a88" strokeWidth=".6" />
            </svg>
          </button>
          <button type="button" aria-label="Paint"><PaintCup /></button>
          <button type="button" aria-label="Calculator">
            <svg viewBox="0 0 16 16" className="size-[16px]">
              <path d="M3 1h10v14H3z" fill="#91b5ed" stroke="#5679b8" />
              <path d="M5 3h6v3H5z" fill="#eaf4ff" />
              <path d="M5 8h1v1H5zM8 8h1v1H8zM11 8h1v1h-1zM5 10h1v1H5zM8 10h1v1H8zM11 10h1v1h-1zM5 12h1v1H5zM8 12h1v1H8zM11 12h1v1h-1z" fill="#fff" />
            </svg>
          </button>
        </div>
        <div className="flex gap-[3px]">
          <Task label="NX 4 - Drafting - [fgdg.prt]">
            <svg viewBox="0 0 16 16" className="size-[16px] shrink-0" aria-hidden="true">
              <circle cx="8" cy="9" r="6" fill="#2462b0" />
              <path d="M1 5l7-4 5 5-5 4z" fill="#e4ad2c" />
              <path d="M4 1l6 2 1 4-4 2z" fill="#b81c24" />
              <circle cx="8" cy="9" r="2.500" fill="#fff" />
            </svg>
          </Task>
          <Task label="211.JPG - 画图"><PaintCup /></Task>
          <Task label="AutoCAD 2004 - [H:\211..." active><AppLogo /></Task>
        </div>
        <svg viewBox="0 0 16 14" className="mr-[5px] ml-auto h-[14px] w-[16px]" fill="none" stroke="#000" aria-hidden="true">
          <path d="M1.500 5.500h13v7h-13zM4 1v2h2l1 1 1-1h3l1 2" />
          <path d="M3 7.500h10M3 9.500h10M4 11.500h8" strokeDasharray="1 1" />
        </svg>
        <span className="mr-[5px] h-[25px] w-[2px] border-l border-l-[#808080] border-r border-r-white" />
        <div className={`flex h-[24px] w-[62px] items-center gap-[7px] pl-[2px] ${sunken}`}>
          <svg viewBox="0 0 16 16" className="size-[16px] shrink-0" aria-hidden="true">
            <path d="M11 3c4 3 4 8 0 11" fill="none" stroke="#a89cd8" strokeWidth="1.500" />
            <circle cx="7" cy="7" r="5.500" fill="#a0a0a8" stroke="#50505a" />
            <circle cx="6" cy="6.500" r="3" fill="#686874" stroke="#d8d8de" />
          </svg>
          <time>10:14</time>
        </div>
      </div>
    </div>
  );
}
